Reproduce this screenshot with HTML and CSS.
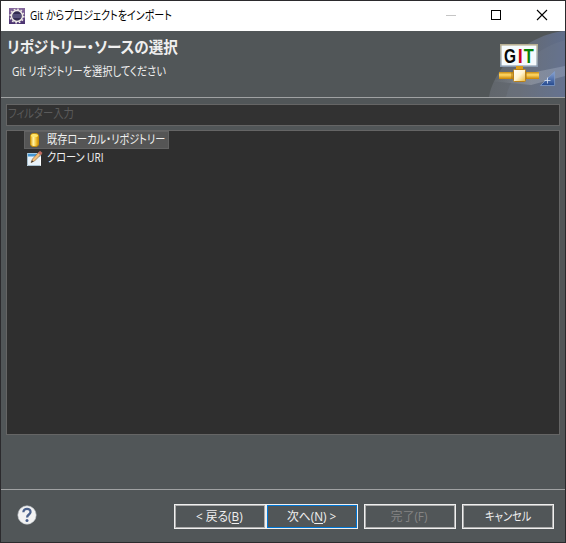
FILE: index.html
```html
<!DOCTYPE html>
<html lang="ja">
<head>
<meta charset="utf-8">
<title>Git からプロジェクトをインポート</title>
<link rel="stylesheet" href="styles.css">
</head>
<body>
<main class="window">
  <header class="titlebar">
    <svg class="app-icon" width="16" height="16" viewBox="0 0 16 16">
      <defs><linearGradient id="app" x2="0" y2="1"><stop stop-color="#876a9e"/><stop offset="1" stop-color="#49316f"/></linearGradient></defs>
      <rect width="16" height="16" fill="url(#app)"/>
      <circle cx="8" cy="8" r="6.8" fill="none" stroke="#eee9e6" stroke-width="1.5" stroke-dasharray="1.7 1.86"/>
      <circle cx="8" cy="8" r="5.5" fill="#322b50" stroke="#eee9e6" stroke-width="1.5"/>
      <path d="M4 7h8M4 9h8" stroke="#7673a0"/>
    </svg>
    <span class="text title-text">Git からプロジェクトをインポート</span>
    <svg class="controls" width="120" height="30" viewBox="0 0 120 30">
      <path d="M0 14.5h10" stroke="#c5c5c5"/>
      <rect x="45.5" y="9.5" width="9" height="9" fill="none" stroke="#000"/>
      <path d="M91 9l10 10M101 9l-10 10" stroke="#000" stroke-width="1.1"/>
    </svg>
  </header>
  <section class="banner">
    <div class="banner-copy">
      <h1 class="text heading">リポジトリー・ソースの選択</h1>
      <p class="text subtitle">Git リポジトリーを選択してください</p>
    </div>
    <svg class="banner-art" width="76" height="66" viewBox="0 0 76 66">
      <defs>
        <linearGradient id="sky" x1="0" y1=".5" x2="1" y2=".6"><stop stop-color="#666b71"/><stop offset=".45" stop-color="#6b717c"/><stop offset="1" stop-color="#6476a0"/></linearGradient>
        <linearGradient id="beam"><stop stop-color="#b0b5bd" stop-opacity="0"/><stop offset=".55" stop-color="#b0b5bd" stop-opacity=".4"/><stop offset="1" stop-color="#a0acc5" stop-opacity=".4"/></linearGradient>
        <linearGradient id="gold" x2="0" y2="1"><stop stop-color="#c88a10"/><stop offset=".4" stop-color="#ffd968"/><stop offset="1" stop-color="#c98200"/></linearGradient>
        <linearGradient id="node" x2="1" y2="1"><stop stop-color="#fff"/><stop offset=".5" stop-color="#fff4d2"/><stop offset="1" stop-color="#eab635"/></linearGradient>
        <linearGradient id="frame" x2="0" y2="1"><stop stop-color="#b8b093"/><stop offset="1" stop-color="#8b9cb0"/></linearGradient>
        <linearGradient id="corner" x2="0" y2="1"><stop stop-color="#8ba5d4"/><stop offset="1" stop-color="#24498e"/></linearGradient>
      </defs>
      <path d="M0 66C4 40 34 4 76 0V66Z" fill="url(#sky)" opacity=".75"/>
      <path d="M17 66C22 42 44 18 76 9V66Z" fill="#7d8698" opacity=".22"/>
      <path d="M2 50L76 35V45L42 54Z" fill="url(#beam)"/>
      <rect x="11.8" y="13.8" width="36.4" height="21.4" fill="#f6fbfd" stroke="url(#frame)" stroke-width="1.6"/>
      <g class="logo-text"><text x="15" y="31.7" textLength="12" lengthAdjust="spacingAndGlyphs" fill="#080808">G</text><text x="28.8" y="31.7" textLength="5" lengthAdjust="spacingAndGlyphs" fill="#c80018">I</text><text x="34.8" y="31.7" textLength="10" lengthAdjust="spacingAndGlyphs" fill="#068006">T</text></g>
      <path d="M27 35h7v4h-7z" fill="#db9c18"/>
      <path d="M10 41h40v7H10z" fill="url(#gold)"/>
      <path d="M23 41v7M37 41v7" stroke="#aa7410"/>
      <rect x="24.5" y="38.5" width="12" height="12" rx="1" fill="url(#node)" stroke="#b9801a"/>
      <path d="M65.6 40.5V54.5H51.5Z" fill="url(#corner)" stroke="#7f9ac9" stroke-width=".8"/>
      <path d="M55.5 49.5h6M58.5 46.5v6" stroke="#dde7f6" stroke-width=".8"/>
    </svg>
  </section>
  <section class="content">
    <div class="filter"><span class="text filter-text">フィルター入力</span></div>
    <div class="tree">
      <div class="row selected">
        <svg width="16" height="16" viewBox="0 0 16 16">
          <defs><linearGradient id="drum"><stop stop-color="#d79b0c"/><stop offset=".35" stop-color="#fff4a8"/><stop offset=".7" stop-color="#f2c335"/><stop offset="1" stop-color="#c88803"/></linearGradient></defs>
          <path d="M3.5 3.5C3.5 .8 11.5 .8 11.5 3.5V12.5C11.5 15.2 3.5 15.2 3.5 12.5Z" fill="url(#drum)" stroke="#c89108"/>
          <ellipse cx="7.5" cy="3.5" rx="3.5" ry="1.5" fill="#ffe66b"/>
        </svg>
        <span class="text repo-text">既存ローカル・リポジトリー</span>
      </div>
      <div class="row">
        <svg width="16" height="16" viewBox="0 0 16 16">
          <rect x=".5" y="3.5" width="13" height="12" fill="#e8f2f9" stroke="#fff"/>
          <path d="M.5 3.5h13v3H.5z" fill="#4797d2"/><path d="M.5 3v12.5h13" fill="none" stroke="#a7bfcd"/>
          <path d="M4 12.5L5.5 9 12 2 14.5 4 7.5 11Z" fill="#f2bd79" stroke="#8d6b45" stroke-width=".7"/>
          <path d="M11 3L13 .7 15.5 3 13.4 5.3Z" fill="#bf6b61"/><path d="M4 12.7l1-2.5 1.5 1.3Z" fill="#333"/>
        </svg>
        <span class="text clone-text">クローン URI</span>
      </div>
    </div>
  </section>
  <footer class="footer">
    <svg class="help" width="20" height="20" viewBox="0 0 20 20">
      <circle cx="10" cy="10" r="9.2" fill="#f2f2f2" stroke="#bcc2c9" stroke-width=".6"/>
      <path d="M6.4 7.3C6.4 2.6 13.8 2.9 13.5 7.2C13.3 9.7 10.1 9.3 10.1 12.5" fill="none" stroke="#4b618c" stroke-width="2.3"/>
      <circle cx="10" cy="15.4" r="1.5" fill="#4b618c"/>
    </svg>
    <div class="buttons">
      <button class="button back"><span class="text back-text">&lt; 戻る(<u>B</u>)</span></button>
      <button class="button next"><span class="text next-text">次へ(<u>N</u>) &gt;</span></button>
      <button class="button finish" disabled><span class="text finish-text">完了(F)</span></button>
      <button class="button cancel"><span class="text cancel-text">キャンセル</span></button>
    </div>
  </footer>
</main>
</body>
</html>
```
FILE: styles.css
```css
* { box-sizing: border-box; }
body {
  margin: 0;
  width: 566px;
  height: 543px;
  overflow: hidden;
  background: #2b2a2d;
  font: 12px/18px "Open Sans", "Noto Sans CJK JP", sans-serif;
  color: #f0f0f0;
}
.window {
  display: flex;
  flex-direction: column;
  width: 564px;
  height: 541px;
  margin: 1px;
  background: #515658;
}
.text {
  display: block;
  flex: none;
  white-space: nowrap;
  transform-origin: left center;
  font-feature-settings: "palt";
}
.titlebar {
  display: flex;
  align-items: center;
  height: 30px;
  padding-left: 8px;
  background: #fff;
  color: #000;
}
.app-icon { margin-right: 5px; }
.title-text { transform: scaleX(.832); }
.controls { margin-left: auto; margin-right: -1px; }
.banner {
  display: flex;
  justify-content: space-between;
  height: 67px;
  border-bottom: 1px solid #a0a2a3;
}
.banner-copy { padding: 5px 0 0 6px; }
.banner-art { display: block; }
.heading {
  margin: 0;
  font-size: 16px;
  line-height: 22px;
  font-weight: 700;
  transform: scaleX(.91);
}
.subtitle { margin: 5px 0 0 5px; transform: scaleX(.85); }
.logo-text { font: 700 21px "Liberation Sans", sans-serif; }
.content { padding: 6px 5px 0; }
.filter {
  height: 22px;
  padding-left: 1px;
  border: 1px solid #656565;
  background: #323232;
  color: #5b5b5b;
}
.filter-text { transform: scaleX(.86); }
.tree {
  height: 305px;
  margin-top: 4px;
  padding-left: 17px;
  border: 1px solid #656565;
  background: #2f2f2f;
}
.row {
  display: flex;
  align-items: center;
  width: 145px;
  height: 18px;
  padding-left: 3px;
}
.row svg { flex: none; margin-right: 4px; }
.row.selected { background: #555; border: 1px solid #626262; padding-left: 2px; }
.repo-text, .clone-text { transform: scaleX(.845); }
.footer {
  display: flex;
  align-items: center;
  justify-content: space-between;
  height: 53px;
  margin-top: auto;
  padding: 0 11px 0 16px;
  border-top: 1px solid #a0a2a3;
}
.help { margin-top: -2px; }
.buttons { display: flex; }
.button {
  display: flex;
  justify-content: center;
  align-items: center;
  width: 92px;
  height: 25px;
  padding: 0;
  border: 1px solid #f0f0f0;
  box-shadow: inset 0 0 0 1px #adadad;
  background: #515658;
  color: #f0f0f0;
  font: inherit;
}
.button .text { transform-origin: center; }
.button .back-text, .button .next-text, .button .finish-text { transform: translate(-.5px, 1px) scaleX(.98); }
.button .cancel-text { transform: translateY(1px) scaleX(.85); }
.button.next { box-shadow: inset 0 0 0 1px #0078d7; }
.button.finish, .button.cancel { margin-left: 6px; }
.button.finish { color: #858585; }
.button u { text-underline-offset: 2px; }
```
